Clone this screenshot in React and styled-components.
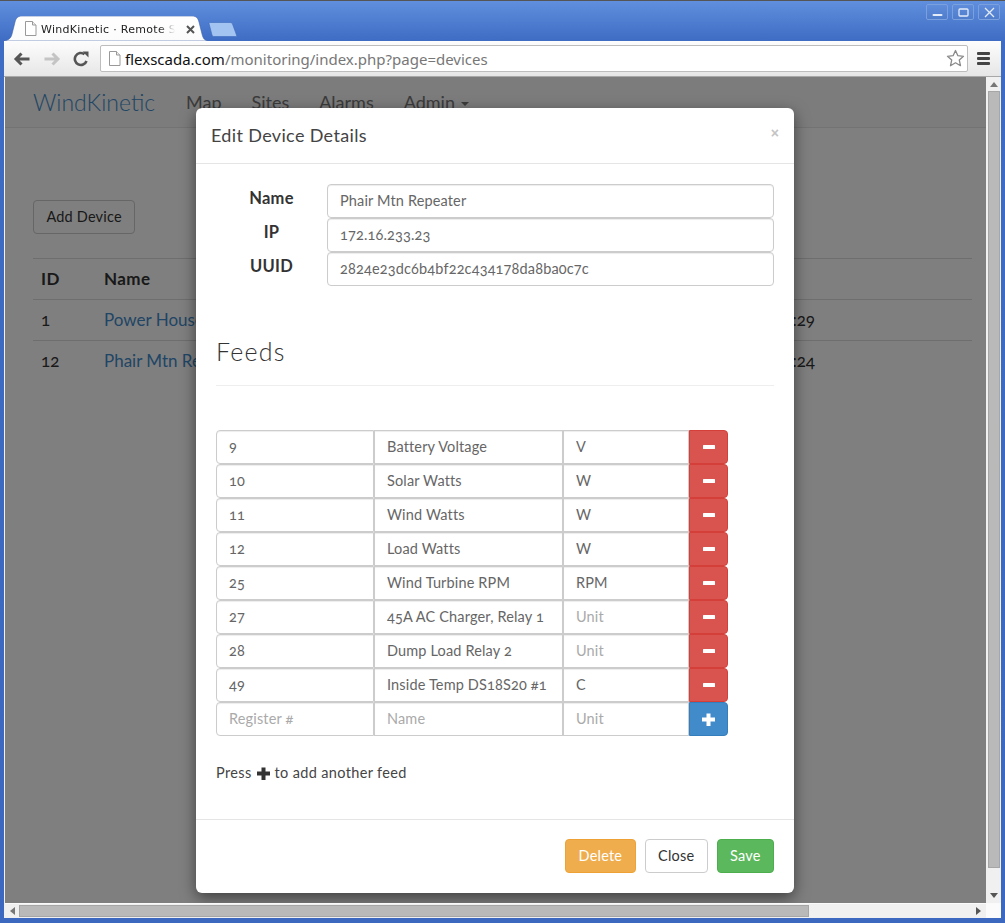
import React from "react";
import styled, { createGlobalStyle } from "styled-components";

const Global = createGlobalStyle`
  html, body { margin: 0; padding: 0; background: #3c68bf; }
  * { box-sizing: border-box; }
`;

const pageFont = `Lato, "Open Sans", "Liberation Sans", sans-serif`;

const Window = styled.div`
  width: 1005px;
  height: 923px;
  overflow: hidden;
  display: flex;
  flex-direction: column;
  background: linear-gradient(#5f8fdd 0, #3e6bc3 41px, #3c68bf 100%);
  border-top: 1px solid #555;
`;

const TitleBar = styled.div`
  height: 40px;
  flex: none;
  display: flex;
  align-items: flex-end;
  padding: 0 5px 0 4px;
`;

const Tab = styled.div`
  position: relative;
  width: 203px;
  height: 25px;
  padding: 6px 0 0 37px;
  display: flex;
  font: 11px "DejaVu Sans", sans-serif;
  letter-spacing: 0.3px;
  color: #222;
`;

const TabShape = styled.svg`
  position: absolute;
  left: 0;
  top: 0;
`;

const TabTitle = styled.span`
  position: relative;
  width: 134px;
  height: 16px;
  white-space: nowrap;
  overflow: hidden;
  line-height: 16px;
  -webkit-mask-image: linear-gradient(to right, #000 118px, transparent 134px);
  mask-image: linear-gradient(to right, #000 118px, transparent 134px);
`;

const TabIcon = styled.div`
  position: absolute;
  left: 20px;
  top: 5px;
`;

const TabClose = styled.svg`
  position: absolute;
  left: 182px;
  top: 9px;
`;

const NewTab = styled.svg`
  flex: none;
  margin: 0 0 4px 0;
`;

const WindowControls = styled.div`
  margin-left: auto;
  align-self: flex-start;
  margin-top: 3px;
  display: flex;
  gap: 4px;
`;

const WinButton = styled.div`
  width: 22px;
  height: 16px;
  border: 1px solid #7ba0de;
  border-radius: 2px;
  background: linear-gradient(#5f8ddb, #4f7ccb);
  display: flex;
  align-items: center;
  justify-content: center;
`;

const Client = styled.div`
  flex: 1;
  margin: 0 4px 5px 4px;
  min-height: 0;
  display: flex;
  flex-direction: column;
  background: #f0f0f0;
`;

const Toolbar = styled.div`
  height: 36px;
  flex: none;
  display: flex;
  align-items: center;
  background: linear-gradient(#fdfdfd, #e6e6e6);
  border-bottom: 1px solid #a8a8a8;
  padding: 0 0 0 9px;
`;

const NavIcon = styled.svg`
  flex: none;
  margin-right: 12px;
`;

const Omnibox = styled.div`
  flex: none;
  width: 868px;
  height: 27px;
  margin-left: -1px;
  background: #fff;
  border: 1px solid #bdbdbd;
  border-radius: 2px;
  display: flex;
  align-items: center;
  padding: 0 2px 0 7px;
  font: 15px "Noto Sans", "Open Sans", sans-serif;
`;

const UrlHost = styled.span`
  color: #111;
  margin-left: 4px;
`;

const UrlPath = styled.span`
  color: #777;
`;

const Star = styled.svg`
  margin-left: auto;
`;

const Menu = styled.div`
  width: 13px;
  margin-left: 9px;
  display: flex;
  flex-direction: column;
  gap: 2px;
`;

const MenuBar = styled.div`
  height: 3px;
  border-radius: 1px;
  background: #444;
`;

const ViewRow = styled.div`
  flex: 1;
  min-height: 0;
  display: flex;
  padding-left: 1px;
`;

const Viewport = styled.div`
  position: relative;
  flex: 1;
  min-width: 0;
  background: #fff;
  overflow: hidden;
  font-family: ${pageFont};
  color: #333;
`;

const VTrack = styled.div`
  width: 15px;
  flex: none;
  display: flex;
  flex-direction: column;
  align-items: center;
  padding: 0 1px;
  background: #f0f0f0;
`;

const ArrowSlot = styled.div`
  height: ${(p) => p.$h}px;
  width: 100%;
  flex: none;
  display: flex;
  align-items: ${(p) => p.$align || "center"};
  justify-content: center;
  padding: 5px 0;
`;

const Arrow = styled.div`
  width: 0;
  height: 0;
  border-style: solid;
  ${(p) => p.$dir === "up" && "border-width: 0 4px 5px 4px; border-color: transparent transparent #777 transparent;"}
  ${(p) => p.$dir === "down" && "border-width: 5px 4px 0 4px; border-color: #555 transparent transparent transparent;"}
  ${(p) => p.$dir === "left" && "border-width: 4px 5px 4px 0; border-color: transparent #777 transparent transparent;"}
  ${(p) => p.$dir === "right" && "border-width: 4px 0 4px 5px; border-color: transparent transparent transparent #555;"}
`;

const VThumb = styled.div`
  width: 12px;
  height: 777px;
  flex: none;
  background: #b9b9b9;
  border: 1px solid #a6a6a6;
`;

const HTrack = styled.div`
  height: 15px;
  flex: none;
  display: flex;
  align-items: center;
  margin-left: 1px;
  border-top: 1px solid #fafafa;
`;

const HSlot = styled.div`
  width: ${(p) => p.$w}px;
  flex: none;
  display: flex;
  justify-content: ${(p) => p.$justify || "center"};
  padding-right: ${(p) => p.$pad || 0}px;
`;

const HThumb = styled.div`
  width: 790px;
  height: 12px;
  flex: none;
  background: #b9b9b9;
  border: 1px solid #a6a6a6;
`;

const Corner = styled.div`
  flex: 1;
  align-self: stretch;
  background: #fbfbfb;
`;

const Navbar = styled.div`
  height: 51px;
  background: #f8f8f8;
  border-bottom: 1px solid #e7e7e7;
  display: flex;
  align-items: center;
  padding-left: 28px;
`;

const Brand = styled.a`
  font-size: 23px;
  font-weight: 300;
  color: #428bca;
  margin-right: 30px;
  width: 123px;
  white-space: nowrap;
`;

const NavLink = styled.a`
  font-size: 18px;
  color: #777;
  margin-right: 30px;
`;

const Caret = styled.span`
  display: inline-block;
  margin-left: 6px;
  vertical-align: middle;
  border-top: 4px solid #777;
  border-left: 4px solid transparent;
  border-right: 4px solid transparent;
`;

const Page = styled.div`
  padding: 72px 0 0 28px;
  width: 967px;
`;

const Button = styled.button`
  font-family: ${pageFont};
  font-size: 14.5px;
  letter-spacing: 0.2px;
  height: 34px;
  padding: 0 12.4px 2px;
  border-radius: 4px;
  border: 1px solid ${(p) => p.$border};
  background: ${(p) => p.$bg};
  color: ${(p) => p.$color};
`;

const Table = styled.table`
  width: 100%;
  table-layout: fixed;
  margin-top: 24px;
  border-collapse: collapse;
  font-size: 17px;
`;

const Th = styled.th`
  text-align: left;
  font-weight: 700;
  font-size: 17px;
  letter-spacing: 0.4px;
  padding: 0 8px 2px;
  height: 41px;
  border-top: 1px solid #ddd;
  border-bottom: 1px solid #ddd;
`;

const Td = styled.td`
  padding: 0 8px 2px;
  height: 41px;
  white-space: nowrap;
  font-variant-numeric: oldstyle-nums;
  border-bottom: ${(p) => (p.$last ? "0" : "1px solid #ddd")};
`;

const TableLink = styled.a`
  color: #428bca;
  font-size: 17px;
`;

const Overlay = styled.div`
  position: absolute;
  inset: 0;
  background: rgba(0, 0, 0, 0.5);
`;

const Modal = styled.div`
  width: 598px;
  margin: 31px 0 0 191px;
  background: #fff;
  border-radius: 6px;
  box-shadow: 0 5px 15px rgba(0, 0, 0, 0.5);
`;

const ModalHeader = styled.div`
  height: 56px;
  padding: 0 15px 2px;
  display: flex;
  align-items: center;
  justify-content: space-between;
  border-bottom: 1px solid #e5e5e5;
`;

const ModalTitle = styled.h4`
  margin: 0;
  font-size: 18px;
  font-weight: 400;
  letter-spacing: 0.35px;
  color: #444;
`;

const CloseX = styled.span`
  font: bold 14px "Liberation Sans", sans-serif;
  color: #c4c4c4;
  margin: 0 0 4px 0;
`;

const ModalBody = styled.div`
  padding: 20px 20px 0;
`;

const FieldRow = styled.div`
  display: flex;
  height: 34px;
`;

const FieldLabel = styled.label`
  width: 111px;
  flex: none;
  text-align: center;
  font-size: 16.5px;
  font-weight: 700;
  letter-spacing: 0.3px;
  line-height: 28px;
  color: #333;
`;

const Input = styled.input`
  min-width: 0;
  width: ${(p) => (p.$w ? `${p.$w}px` : "100%")};
  height: 34px;
  flex: ${(p) => (p.$w ? "none" : 1)};
  padding: 0 12px 2px;
  font-family: ${pageFont};
  font-size: 14.5px;
  letter-spacing: 0.15px;
  font-variant-numeric: oldstyle-nums;
  color: #666;
  background: #fff;
  border: 1px solid #ccc;
  border-radius: ${(p) => p.$radius || "4px"};
  box-shadow: inset 0 1px 1px rgba(0, 0, 0, 0.075);
  outline: none;
  &::placeholder {
    color: #aaa;
    opacity: 1;
  }
`;

const Heading = styled.h3`
  margin: 51px 0 0;
  font-size: 25px;
  line-height: 28px;
  font-weight: 300;
  letter-spacing: 1.2px;
  color: #333;
`;

const Rule = styled.hr`
  margin: 20px 0 44px;
  border: 0;
  border-top: 1px solid #eee;
`;

const FeedRow = styled.div`
  display: flex;
  height: 34px;
`;

const IconButton = styled.div`
  width: 39px;
  height: 34px;
  flex: none;
  display: flex;
  align-items: center;
  justify-content: center;
  border-radius: 0 4px 4px 0;
  border: 1px solid ${(p) => p.$border};
  background: ${(p) => p.$bg};
`;

const Hint = styled.p`
  margin: 27px 0 0;
  height: 20px;
  font-size: 14.5px;
  letter-spacing: 0.35px;
  line-height: 20px;
  color: #444;
  display: flex;
  align-items: center;
  gap: 5px;
`;

const ModalFooter = styled.div`
  margin-top: 36px;
  padding: 19px 20px 20px;
  border-top: 1px solid #e5e5e5;
  display: flex;
  justify-content: flex-end;
  gap: 9px;
`;

const Plus = ({ size = 13, color = "#fff" }) => (
  <svg width={size} height={size} viewBox="0 0 13 13">
    <path d="M4.5 0.5h4v4h4.5v4H8.5v4.5h-4V8.500H0v-4h4.500z" fill={color} />
  </svg>
);

const Minus = () => (
  <svg width="12" height="4" viewBox="0 0 12 4">
    <rect width="12" height="4" rx="0.5" fill="#fff" />
  </svg>
);

const PageGlyph = ({ stroke = "#999" }) => (
  <svg width="13" height="15" viewBox="0 0 13 15">
    <path d="M1.500.5h7l3.500 3.500v10.500h-10.500z" fill="#fff" stroke={stroke} />
    <path d="M8.500.5v3.500h3.500" fill="#eee" stroke={stroke} />
  </svg>
);

const feeds = [
  ["9", "Battery Voltage", "V"],
  ["10", "Solar Watts", "W"],
  ["11", "Wind Watts", "W"],
  ["12", "Load Watts", "W"],
  ["25", "Wind Turbine RPM", "RPM"],
  ["27", "45A AC Charger, Relay 1", ""],
  ["28", "Dump Load Relay 2", ""],
  ["49", "Inside Temp DS18S20 #1", "C"],
];

const fields = [
  ["Name", "Phair Mtn Repeater"],
  ["IP", "172.16.233.23"],
  ["UUID", "2824e23dc6b4bf22c434178da8ba0c7c"],
];

export default function App() {
  return (
    <Window>
      <Global />
      <TitleBar>
        <Tab>
          <TabShape width="204" height="25" viewBox="0 0 204 25">
            <defs>
              <linearGradient id="tabfill" x1="0" y1="0" x2="0" y2="1">
                <stop offset="0" stopColor="#ffffff" />
                <stop offset="1" stopColor="#fbfbfb" />
              </linearGradient>
            </defs>
            <path
              d="M0 25C5 24 7 22 8 18L11 6C12 2 14 0 18 0H188C192 0 194 2 195 6L198 18C199 22 200 24 204 25Z"
              fill="url(#tabfill)"
              stroke="#3a5fa8"
              strokeWidth="0.6"
            />
          </TabShape>
          <TabIcon>
            <PageGlyph />
          </TabIcon>
          <TabTitle>WindKinetic · Remote Site Monitoring</TabTitle>
          <TabClose width="9" height="9" viewBox="0 0 9 9">
            <path d="M1 1l7 7M8 1l-7 7" stroke="#555" strokeWidth="2" />
          </TabClose>
        </Tab>
        <NewTab width="31" height="15" viewBox="0 0 31 15">
          <path
            d="M2 1.500C2 .800 2.500.500 3 .500H23C24.500.500 25 1 25.500 2L29.500 13C29.800 14 29.500 14.500 28.500 14.500H7C6 14.500 5.500 14 5 13Z"
            fill="#a3c4f1"
            stroke="#3d68b8"
            strokeWidth="0.6"
          />
        </NewTab>
        <WindowControls>
          <WinButton>
            <svg width="11" height="11" viewBox="0 0 11 11">
              <rect x="0.5" y="7" width="10" height="2" rx="1" fill="#e4ecfa" />
            </svg>
          </WinButton>
          <WinButton>
            <svg width="11" height="9" viewBox="0 0 11 9">
              <rect x="1" y="1" width="9" height="7" rx="1" fill="none" stroke="#e4ecfa" strokeWidth="1.300" />
            </svg>
          </WinButton>
          <WinButton>
            <svg width="11" height="11" viewBox="0 0 11 11">
              <path d="M1 1l9 9M10 1l-9 9" stroke="#e4ecfa" strokeWidth="1.300" />
            </svg>
          </WinButton>
        </WindowControls>
      </TitleBar>

      <Client>
        <Toolbar>
          <NavIcon width="18" height="16" viewBox="0 0 18 16">
            <path d="M3 8H16.500M8.500 2.500L3 8l5.500 5.500" fill="none" stroke="#555" strokeWidth="3" />
          </NavIcon>
          <NavIcon width="18" height="16" viewBox="0 0 18 16">
            <path d="M15 8H1.500M9.500 2.500L15 8l-5.500 5.500" fill="none" stroke="#c4c4c4" strokeWidth="3" />
          </NavIcon>
          <NavIcon width="16" height="16" viewBox="0 0 16 16">
            <path d="M13.500 10A6 6 0 1 1 11.500 3.200" fill="none" stroke="#555" strokeWidth="2.600" />
            <path d="M9.500 .5H15.500V6.500Z" fill="#555" />
          </NavIcon>
          <Omnibox>
            <PageGlyph />
            <UrlHost>flexscada.com</UrlHost>
            <UrlPath>/monitoring/index.php?page=devices</UrlPath>
            <Star width="19" height="19" viewBox="0 0 19 19">
              <path
                d="M9.500 1.500l2.400 5.200 5.600.6-4.200 3.800 1.200 5.600-5-2.900-5 2.900 1.200-5.600-4.200-3.800 5.600-.6z"
                fill="#fff"
                stroke="#8a8a8a"
                strokeWidth="1.300"
                strokeLinejoin="round"
              />
            </Star>
          </Omnibox>
          <Menu>
            <MenuBar />
            <MenuBar />
            <MenuBar />
          </Menu>
        </Toolbar>

        <ViewRow>
          <Viewport>
            <Navbar>
              <Brand>WindKinetic</Brand>
              <NavLink>Map</NavLink>
              <NavLink>Sites</NavLink>
              <NavLink>Alarms</NavLink>
              <NavLink>
                Admin
                <Caret />
              </NavLink>
            </Navbar>
            <Page>
              <Button $bg="#fff" $border="#ccc" $color="#333">
                Add Device
              </Button>
              <Table>
                <colgroup>
                  <col width="63" />
                  <col />
                  <col width="180" />
                  <col width="139" />
                </colgroup>
                <thead>
                  <tr>
                    <Th>ID</Th>
                    <Th>Name</Th>
                    <Th>Seen</Th>
                    <Th />
                  </tr>
                </thead>
                <tbody>
                  <tr>
                    <Td>1</Td>
                    <Td>
                      <TableLink>Power House</TableLink>
                    </Td>
                    <Td>2014-09-16 10:41:29</Td>
                    <Td />
                  </tr>
                  <tr>
                    <Td $last>12</Td>
                    <Td $last>
                      <TableLink>Phair Mtn Repeater</TableLink>
                    </Td>
                    <Td $last>2014-09-16 10:41:24</Td>
                    <Td $last />
                  </tr>
                </tbody>
              </Table>
            </Page>

            <Overlay>
              <Modal>
                <ModalHeader>
                  <ModalTitle>Edit Device Details</ModalTitle>
                  <CloseX>×</CloseX>
                </ModalHeader>
                <ModalBody>
                  {fields.map(([label, value]) => (
                    <FieldRow key={label}>
                      <FieldLabel>{label}</FieldLabel>
                      <Input readOnly defaultValue={value} />
                    </FieldRow>
                  ))}
                  <Heading>Feeds</Heading>
                  <Rule />
                  {feeds.map(([reg, name, unit]) => (
                    <FeedRow key={reg}>
                      <Input readOnly $w={158} $radius="4px 0 0 4px" defaultValue={reg} />
                      <Input readOnly $w={189} $radius="0" defaultValue={name} />
                      <Input readOnly $w={126} $radius="0" defaultValue={unit} placeholder="Unit" />
                      <IconButton $bg="#d9534f" $border="#d43f3a">
                        <Minus />
                      </IconButton>
                    </FeedRow>
                  ))}
                  <FeedRow>
                    <Input readOnly $w={158} $radius="4px 0 0 4px" placeholder="Register #" />
                    <Input readOnly $w={189} $radius="0" placeholder="Name" />
                    <Input readOnly $w={126} $radius="0" placeholder="Unit" />
                    <IconButton $bg="#428bca" $border="#357ebd">
                      <Plus />
                    </IconButton>
                  </FeedRow>
                  <Hint>
                    Press <Plus color="#333" /> to add another feed
                  </Hint>
                </ModalBody>
                <ModalFooter>
                  <Button $bg="#f0ad4e" $border="#eea236" $color="#fff">
                    Delete
                  </Button>
                  <Button $bg="#fff" $border="#ccc" $color="#333">
                    Close
                  </Button>
                  <Button $bg="#5cb85c" $border="#4cae4c" $color="#fff">
                    Save
                  </Button>
                </ModalFooter>
              </Modal>
            </Overlay>
          </Viewport>
          <VTrack>
            <ArrowSlot $h={14}>
              <Arrow $dir="up" />
            </ArrowSlot>
            <VThumb />
            <ArrowSlot $h={35} $align="flex-end">
              <Arrow $dir="down" />
            </ArrowSlot>
          </VTrack>
        </ViewRow>
        <HTrack>
          <HSlot $w={14}>
            <Arrow $dir="left" />
          </HSlot>
          <HThumb />
          <HSlot $w={177} $justify="flex-end" $pad={5}>
            <Arrow $dir="right" />
          </HSlot>
          <Corner />
        </HTrack>
      </Client>
    </Window>
  );
}
